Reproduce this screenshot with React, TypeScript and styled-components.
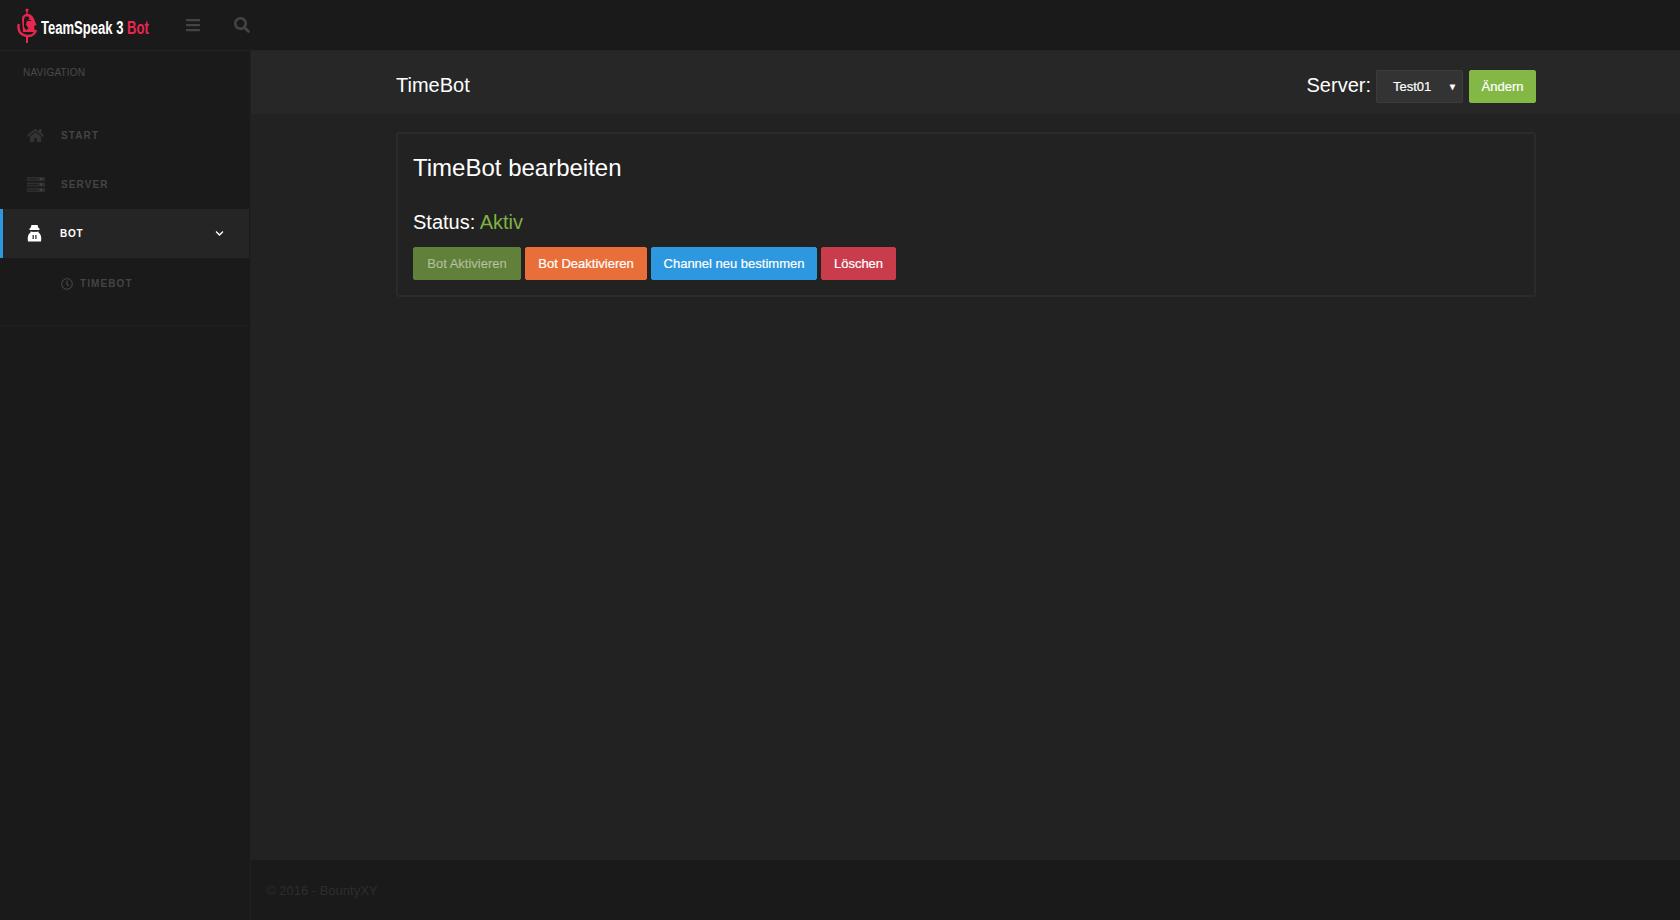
import React from "react";
import styled, { createGlobalStyle } from "styled-components";
import { FaHome, FaBars, FaSearch, FaChevronDown, FaRegClock } from "react-icons/fa";

const GlobalStyle = createGlobalStyle`
  html, body {
    margin: 0;
    height: 100%;
    background: #1a1a1a;
    font-family: "Liberation Sans", Arial, sans-serif;
  }
  * { box-sizing: border-box; }
`;

const LogoSvg = styled.svg`
  flex: none;
`;

const Logo = () => (
  <LogoSvg width="21" height="35" viewBox="0 0 21 35" fill="none">
    <circle cx="10" cy="2" r="1.6" fill="#e8264f" />
    <path d="M10 2v5" stroke="#e8264f" strokeWidth="1.4" />
    <path d="M5 11c0-3 2-5 5.5-5 3.5 0 5.5 2 6.5 5l2.5 6-2.5 1 1 6H6z" fill="#e8264f" />
    <path d="M7 11.5l1-3h3.5l3 4.5h-4.5l-1 3.5 2.5 4-2.5 1.5-2-3z" fill="#1a1a1a" />
    <path d="M11.5 10.5h2l.8 1.5h-2.5z" fill="#e8264f" />
    <path d="M1.8 16c-1.3 6 1 11 8.2 12 5.5.5 8-2.5 9-6" stroke="#e8264f" strokeWidth="2.4" fill="none" />
    <path d="M10 28v7" stroke="#e8264f" strokeWidth="2" />
  </LogoSvg>
);

const ServerIcon = () => (
  <svg width="18" height="15" viewBox="0 0 18 15" fill="#2e2e2e">
    <rect x="0" y="0" width="18" height="4" />
    <rect x="0" y="5.5" width="18" height="4" />
    <rect x="0" y="11" width="18" height="4" />
    <rect x="1" y="1.5" width="10" height="1" fill="#1f1f1f" />
    <rect x="1" y="7" width="10" height="1" fill="#1f1f1f" />
    <rect x="1" y="12.5" width="10" height="1" fill="#1f1f1f" />
    <rect x="13" y="1" width="2" height="2" fill="#444" />
    <rect x="13" y="6.5" width="2" height="2" fill="#444" />
    <rect x="13" y="12" width="2" height="2" fill="#444" />
  </svg>
);

const BotIcon = () => (
  <svg width="15" height="17" viewBox="0 0 15 17" fill="#fff">
    <path d="M4.5 0h6l1 3 1 .5V5h-10V3.500l1-.5z" />
    <path d="M1 16.500C.2 12.500 1 9 3.500 7.500v-1h8v1c2.500 1.500 3.300 5 2.500 9z" />
    <rect x="4.5" y="6" width="6" height="1" fill="#444" />
    <rect x="5.5" y="10" width="1.4" height="4" fill="#444" />
    <rect x="8.2" y="10" width="1.4" height="4" fill="#444" />
  </svg>
);

const Page = styled.div`
  min-height: 920px;
  display: flex;
  flex-direction: column;
`;

const TopBar = styled.header`
  height: 51px;
  display: flex;
  align-items: center;
  background: #1a1a1a;
  border-bottom: 1px solid #232323;
`;

const Brand = styled.div`
  width: 185px;
  padding-left: 17px;
  display: flex;
  align-items: center;
  gap: 3px;
`;

const BrandText = styled.span`
  display: inline-block;
  margin-top: 6px;
  transform: scaleX(0.725);
  transform-origin: left center;
  font-weight: 700;
  font-size: 18px;
  color: #fff;
  white-space: nowrap;
  b { color: #e8264f; font-weight: 700; }
`;

const TopIcon = styled.span<{ $gap: number }>`
  display: flex;
  color: #444;
  font-size: 16px;
  margin-right: ${(p) => p.$gap}px;
`;

const Body = styled.div`
  flex: 1;
  display: flex;
`;

const Sidebar = styled.aside`
  width: 250px;
  flex: none;
  background: #1a1a1a;
  border-right: 1px solid #1a1a1a;
`;

const NavTitle = styled.div`
  height: 60px;
  padding: 16px 0 0 23px;
  font-size: 10px;
  line-height: 12px;
  letter-spacing: 0.2px;
  color: #4a4a4a;
`;

const NavList = styled.nav`
  border-bottom: 1px solid #1f1f1f;
  padding-bottom: 18px;
`;

const NavRow = styled.div<{ $active?: boolean }>`
  height: 49px;
  display: flex;
  align-items: center;
  padding-left: ${(p) => (p.$active ? 24 : 27)}px;
  background: ${(p) => (p.$active ? "#252525" : "transparent")};
  border-left: ${(p) => (p.$active ? "3px solid #2d97e0" : "none")};
`;

const NavIcon = styled.span<{ $active?: boolean }>`
  width: ${(p) => (p.$active ? 33 : 34)}px;
  flex: none;
  display: flex;
  color: #333;
  font-size: 17px;
`;

const NavLabel = styled.span<{ $active?: boolean }>`
  font-size: 10px;
  font-weight: 700;
  letter-spacing: ${(p) => (p.$active ? 0.8 : 1.1)}px;
  color: ${(p) => (p.$active ? "#fff" : "#444")};
`;

const Chevron = styled.span`
  margin-left: auto;
  margin-right: 25px;
  display: flex;
  color: #fff;
  font-size: 9px;
`;

const SubRow = styled.div`
  height: 49px;
  padding: 2px 0 0 61px;
  display: flex;
  align-items: center;
  gap: 7px;
  color: #444;
  font-size: 12px;
`;

const Main = styled.main`
  flex: 1;
  display: flex;
  flex-direction: column;
  background: #222;
  border-left: 1px solid #202020;
`;

const ContentHead = styled.div`
  height: 63px;
  background: #272727;
  display: flex;
  align-items: center;
  padding: 6px 144px 0 145px;
`;

const PageTitle = styled.h1`
  margin: 0;
  flex: 1;
  font-size: 20px;
  font-weight: 400;
  color: #fff;
`;

const ServerLabel = styled.span`
  font-size: 20px;
  color: #fff;
  margin-right: 5px;
`;

const SelectBox = styled.div`
  width: 87px;
  height: 33px;
  margin: 2px 6px 0 0;
  padding: 0 5px 0 16px;
  display: flex;
  align-items: center;
  justify-content: space-between;
  background: #333;
  border: 1px solid #3c3c3c;
  border-radius: 2px;
  color: #fff;
  font-size: 13px;
  -webkit-text-stroke: 0.2px currentColor;
  span { font-size: 9px; }
`;

const Content = styled.div`
  flex: 1;
  padding: 18px 144px 18px 145px;
`;

const Card = styled.section`
  height: 165px;
  padding: 20px 15px 0;
  border: 2px solid #2b2b2b;
  border-radius: 3px;
`;

const CardTitle = styled.h2`
  margin: 0;
  font-size: 24px;
  line-height: 28px;
  font-weight: 400;
  color: #fff;
`;

const Status = styled.div`
  margin-top: 29px;
  font-size: 20px;
  line-height: 23px;
  color: #fff;
  span { color: #7fb343; }
`;

const Buttons = styled.div`
  margin-top: 13px;
  display: flex;
  gap: 4px;
`;

const Btn = styled.button<{ $bg: string; $w: number; $dim?: boolean }>`
  width: ${(p) => p.$w}px;
  height: 33px;
  padding: 0;
  border: 1px solid ${(p) => p.$bg};
  border-radius: 2px;
  background: ${(p) => p.$bg};
  color: ${(p) => (p.$dim ? "rgba(255,255,255,0.45)" : "#fff")};
  font-family: inherit;
  font-size: 13px;
  -webkit-text-stroke: 0.2px currentColor;
`;

const HeadBtn = styled(Btn)`
  margin-top: 2px;
`;

const Footer = styled.footer`
  height: 60px;
  padding: 23px 15px;
  background: #1a1a1a;
  font-size: 13px;
  line-height: 16px;
  color: #2e2e2e;
`;

export default function App() {
  return (
    <Page>
      <GlobalStyle />
      <TopBar>
        <Brand>
          <Logo />
          <BrandText>
            TeamSpeak 3 <b>Bot</b>
          </BrandText>
        </Brand>
        <TopIcon $gap={33}>
          <FaBars />
        </TopIcon>
        <TopIcon $gap={0}>
          <FaSearch />
        </TopIcon>
      </TopBar>
      <Body>
        <Sidebar>
          <NavTitle>NAVIGATION</NavTitle>
          <NavList>
            <NavRow>
              <NavIcon>
                <FaHome />
              </NavIcon>
              <NavLabel>START</NavLabel>
            </NavRow>
            <NavRow>
              <NavIcon>
                <ServerIcon />
              </NavIcon>
              <NavLabel>SERVER</NavLabel>
            </NavRow>
            <NavRow $active>
              <NavIcon $active>
                <BotIcon />
              </NavIcon>
              <NavLabel $active>BOT</NavLabel>
              <Chevron>
                <FaChevronDown />
              </Chevron>
            </NavRow>
            <SubRow>
              <FaRegClock />
              <NavLabel>TIMEBOT</NavLabel>
            </SubRow>
          </NavList>
        </Sidebar>
        <Main>
          <ContentHead>
            <PageTitle>TimeBot</PageTitle>
            <ServerLabel>Server:</ServerLabel>
            <SelectBox>
              Test01 <span>▼</span>
            </SelectBox>
            <HeadBtn $bg="#83b846" $w={67}>
              Ändern
            </HeadBtn>
          </ContentHead>
          <Content>
            <Card>
              <CardTitle>TimeBot bearbeiten</CardTitle>
              <Status>
                Status: <span>Aktiv</span>
              </Status>
              <Buttons>
                <Btn $bg="#618039" $w={108} $dim>
                  Bot Aktivieren
                </Btn>
                <Btn $bg="#e96f3a" $w={122}>
                  Bot Deaktivieren
                </Btn>
                <Btn $bg="#2d97e0" $w={166}>
                  Channel neu bestimmen
                </Btn>
                <Btn $bg="#c93c4c" $w={75}>
                  Löschen
                </Btn>
              </Buttons>
            </Card>
          </Content>
          <Footer>© 2016 - BountyXY</Footer>
        </Main>
      </Body>
    </Page>
  );
}
